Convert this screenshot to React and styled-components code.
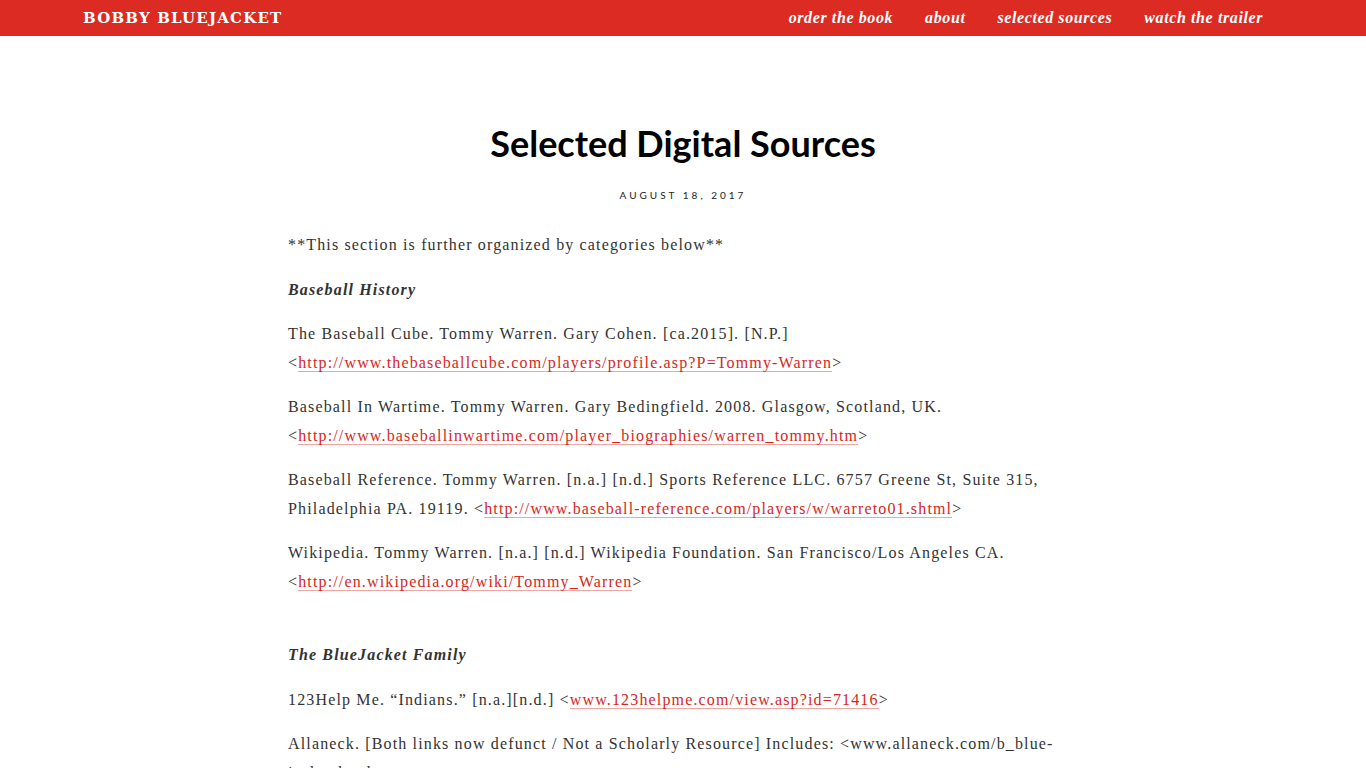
import React from "react";
import styled, { createGlobalStyle } from "styled-components";

const Global = createGlobalStyle`
  body { margin: 0; background: #fff; font-family: "Liberation Serif", serif; }
`;
const Bar = styled.header`
  height: 36px; background: #db2b22; display: flex; align-items: center;
  justify-content: space-between; padding: 0 103px 0 83px;
`;
const Brand = styled.div`
  color: #fff; font-family: "DejaVu Serif", serif; font-size: 15px; letter-spacing: 1.2px;
  font-weight: bold;
`;
const Nav = styled.nav` display: flex; gap: 32px; `;
const NavLink = styled.a`
  color: #fff; font-family: "Liberation Serif", serif; font-style: italic; font-weight: bold;
  font-size: 16px; letter-spacing: 0.6px; text-decoration: none;
`;
const Main = styled.main` width: 790px; margin: 0 auto; padding-top: 85px; `;
const Title = styled.h1`
  margin: 0; text-align: center; font-family: "Lato", sans-serif; font-weight: 700;
  font-size: 36px; color: #000; line-height: 44px;
`;
const Date = styled.div`
  text-align: center; font-family: "Lato", sans-serif; font-size: 10px; letter-spacing: 3px;
  color: #222; margin-top: 24px; margin-bottom: 30px;
`;
const P = styled.p`
  margin: 0 0 16px; font-size: 16px; line-height: 28.5px; color: #333; letter-spacing: 1.15px;
  font-family: "Liberation Serif", serif;
`;
const Head = styled(P)` font-style: italic; font-weight: bold; margin-top: ${p => p.$top || 0}px; `;
const A = styled.a` color: #d9261c; text-decoration: none; border-bottom: 1px solid #f0a5a0; `;

export default function App() {
  return (
    <>
      <Global />
      <Bar>
        <Brand>BOBBY BLUEJACKET</Brand>
        <Nav>
          <NavLink>order the book</NavLink>
          <NavLink>about</NavLink>
          <NavLink>selected sources</NavLink>
          <NavLink>watch the trailer</NavLink>
        </Nav>
      </Bar>
      <Main>
        <Title>Selected Digital Sources</Title>
        <Date>AUGUST 18, 2017</Date>
        <P>**This section is further organized by categories below**</P>
        <Head>Baseball History</Head>
        <P>The Baseball Cube. Tommy Warren. Gary Cohen. [ca.2015]. [N.P.]<br />&lt;<A>http://www.thebaseballcube.com/players/profile.asp?P=Tommy-Warren</A>&gt;</P>
        <P>Baseball In Wartime. Tommy Warren. Gary Bedingfield. 2008. Glasgow, Scotland, UK.<br />&lt;<A>http://www.baseballinwartime.com/player_biographies/warren_tommy.htm</A>&gt;</P>
        <P>Baseball Reference. Tommy Warren. [n.a.] [n.d.] Sports Reference LLC. 6757 Greene St, Suite 315,<br />Philadelphia PA. 19119. &lt;<A>http://www.baseball-reference.com/players/w/warreto01.shtml</A>&gt;</P>
        <P>Wikipedia. Tommy Warren. [n.a.] [n.d.] Wikipedia Foundation. San Francisco/Los Angeles CA.<br />&lt;<A>http://en.wikipedia.org/wiki/Tommy_Warren</A>&gt;</P>
        <Head $top={45}>The BlueJacket Family</Head>
        <P>123Help Me. “Indians.” [n.a.][n.d.] &lt;<A>www.123helpme.com/view.asp?id=71416</A>&gt;</P>
        <P>Allaneck. [Both links now defunct / Not a Scholarly Resource] Includes: &lt;www.allaneck.com/b_blue-jacket.html&gt;</P>
      </Main>
    </>
  );
}
